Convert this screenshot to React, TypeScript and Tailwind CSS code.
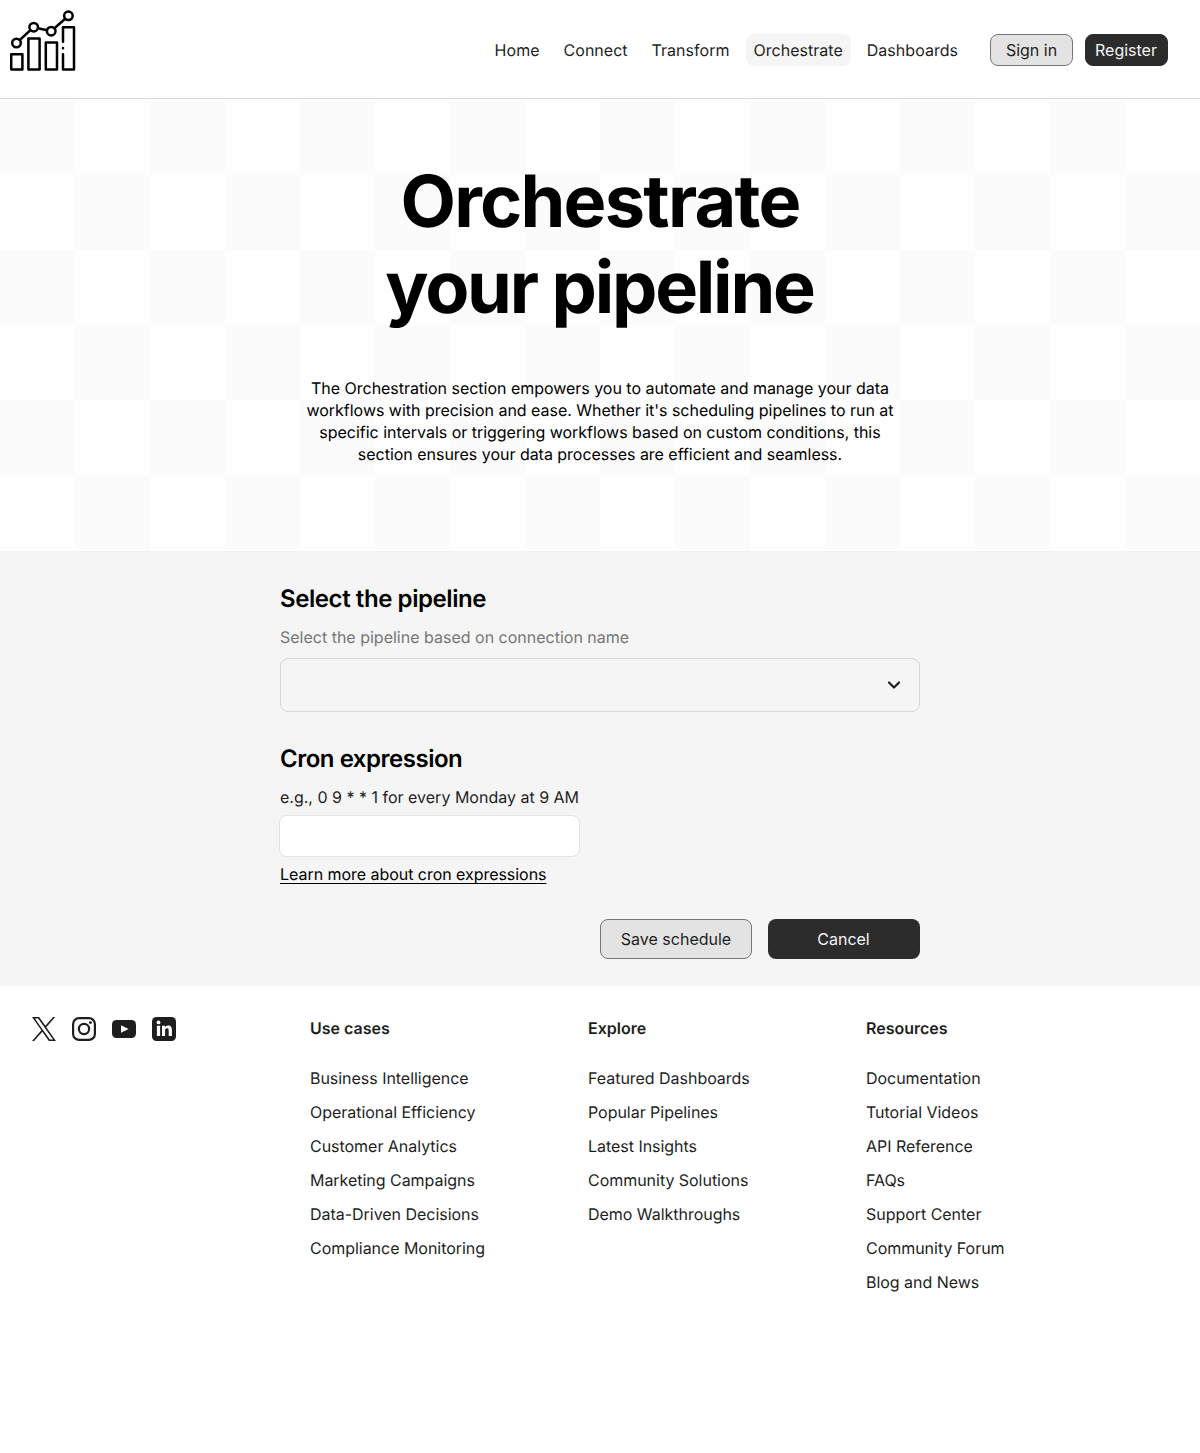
import React from "react";

const nav = ["Home", "Connect", "Transform", "Orchestrate", "Dashboards"];
const columns = [
  { title: "Use cases", links: ["Business Intelligence", "Operational Efficiency", "Customer Analytics", "Marketing Campaigns", "Data-Driven Decisions", "Compliance Monitoring"] },
  { title: "Explore", links: ["Featured Dashboards", "Popular Pipelines", "Latest Insights", "Community Solutions", "Demo Walkthroughs"] },
  { title: "Resources", links: ["Documentation", "Tutorial Videos", "API Reference", "FAQs", "Support Center", "Community Forum", "Blog and News"] },
];

function Logo() {
  return (
    <svg width="66" height="62" viewBox="0 0 66 62" fill="none" stroke="#000" strokeWidth="2.5" strokeLinejoin="round" strokeLinecap="round">
      <rect x="1.2" y="44.2" width="11.2" height="15.2" />
      <rect x="18.4" y="28.6" width="11.2" height="30.8" />
      <rect x="35.8" y="32.6" width="11.2" height="26.8" />
      <path d="M53 31.8V17.2h11v42.2H53V44.2M53 38v.2" />
      <circle cx="6.5" cy="33" r="4.3" />
      <circle cx="23.7" cy="17.2" r="4.3" />
      <circle cx="41.2" cy="21.2" r="4.3" />
      <circle cx="58.4" cy="5.8" r="4.3" />
      <path d="M9.8 30 20.4 20.2M28 18.2l9 2M44.4 18.2 55.2 8.8" />
    </svg>
  );
}

function Socials() {
  return (
    <div className="flex w-[278px] gap-4">
      <svg width="24" height="24" viewBox="0 0 24 24" fill="#1e1e1e">
        <path fillRule="evenodd" d="M14.28 10.16 23.22 0H21.1l-7.76 8.82L7.15 0H0l9.37 13.34L0 24h2.12l8.19-9.32L16.85 24H24zM11.38 13.46l-.95-1.33L2.88 1.56h3.25l6.1 8.53.95 1.33 7.92 11.09h-3.25z" />
      </svg>
      <svg width="24" height="24" viewBox="0 0 24 24" fill="none" stroke="#1e1e1e" strokeWidth="2.2">
        <rect x="1.1" y="1.1" width="21.8" height="21.8" rx="6" />
        <circle cx="12" cy="12" r="5.1" />
        <circle cx="18.4" cy="5.6" r="1.45" fill="#1e1e1e" stroke="none" />
      </svg>
      <svg width="24" height="24" viewBox="0 0 24 24">
        <rect y="3" width="24" height="18" rx="4.5" fill="#1e1e1e" />
        <path d="M9 8.3v7.4l7.6-3.7z" fill="#fff" />
      </svg>
      <svg width="24" height="24" viewBox="0 0 24 24">
        <rect width="24" height="24" rx="4.5" fill="#1e1e1e" />
        <circle cx="6.5" cy="5.4" r="1.9" fill="#fff" />
        <path fill="#fff" d="M4.9 8.8h3.2V19H4.9zM10 8.8h3v1.4c.5-.9 1.6-1.7 3.1-1.7 3.1 0 3.8 2 3.8 4.8V19h-3.2v-5.1c0-1.3-.1-2.7-1.7-2.7s-1.9 1.2-1.9 2.6V19H10z" />
      </svg>
    </div>
  );
}

export default function App() {
  return (
    <div className="min-h-[1453px] w-[1200px] bg-white font-['Inter',sans-serif] text-base leading-none text-[#1e1e1e] antialiased [text-rendering:geometricPrecision]">
      <header className="flex h-[99px] items-center border-b border-[#d9d9d9] pr-8">
        <div className="mt-[10px] ml-[10px] self-start"><Logo /></div>
        <nav className="mt-px ml-auto flex gap-2 tracking-[0.0015em]">
          {nav.map((n) => (
            <a key={n} className={n === "Orchestrate" ? "rounded-lg bg-[#f5f5f5] p-2" : "p-2"}>{n}</a>
          ))}
        </nav>
        <div className="mt-px ml-6 flex gap-3">
          <button className="h-8 w-[83px] rounded-lg border border-[#767676] bg-[#e3e3e3]">Sign in</button>
          <button className="h-8 w-[83px] rounded-lg border border-[#2c2c2c] bg-[#2c2c2c] pr-[7px] pl-[6px] text-[#f5f5f5]">Register</button>
        </div>
      </header>
      <section className="h-[452px] bg-[conic-gradient(#fefefe_25%,#fbfbfb_0_50%,#fefefe_0_75%,#fbfbfb_0)] bg-[length:150px_150px] bg-[position:0_1px] pt-[60px] text-center text-black">
        <h1 className="text-[72px] leading-[86px] font-bold">
          <span className="block tracking-[-0.0245em]">Orchestrate</span>
          <span className="block pr-px tracking-[-0.031em]">your pipeline</span>
        </h1>
        <p className="mt-[46px] leading-[22px] tracking-[-0.0015em]">
          The Orchestration section empowers you to automate and manage your data<br />
          workflows with precision and ease. Whether it's scheduling pipelines to run at<br />
          specific intervals or triggering workflows based on custom conditions, this<br />
          section ensures your data processes are efficient and seamless.
        </p>
      </section>
      <main className="h-[435px] bg-[#f5f5f5] px-[280px] pt-[33px]">
        <h2 className="text-2xl leading-[30px] font-semibold tracking-[-0.0175em] text-black">Select the pipeline</h2>
        <p className="mt-3 leading-[22px] text-[#757575]">Select the pipeline based on connection name</p>
        <div className="mt-[10px] flex h-[54px] items-center justify-end rounded-lg border border-[#d9d9d9] pr-[17px]">
          <svg width="16" height="16" viewBox="0 0 16 16" fill="none" stroke="#1e1e1e" strokeWidth="2.2" strokeLinecap="round" strokeLinejoin="round"><path d="m3 5.5 5 5 5-5" /></svg>
        </div>
        <h2 className="mt-8 text-2xl leading-[30px] font-semibold tracking-[-0.02em] text-black">Cron expression</h2>
        <p className="mt-3 leading-[22px]">e.g., 0 9 * * 1 for every Monday at 9 AM</p>
        <input className="mt-[7px] -ml-px block h-[42px] w-[301px] rounded-lg border border-[#e3e3e3] bg-white px-4" />
        <a className="mt-[6px] block w-fit leading-[22px] tracking-[-0.0025em] text-black underline decoration-[1.3px] underline-offset-[3px]">Learn more about cron expressions</a>
        <div className="mt-[34px] flex justify-end gap-4">
          <button className="h-10 w-[152px] rounded-lg border border-[#767676] bg-[#e3e3e3]">Save schedule</button>
          <button className="h-10 w-[152px] rounded-lg bg-[#2c2c2c] pr-[7px] pl-[6px] text-[#f5f5f5]">Cancel</button>
        </div>
      </main>
      <footer className="flex px-8 pt-[31px]">
        <Socials />
        {columns.map((c) => (
          <div key={c.title} className="w-[278px]">
            <h3 className="leading-[22px] font-semibold">{c.title}</h3>
            <ul className="mt-7 flex flex-col gap-3 tracking-[-0.002em]">
              {c.links.map((l) => <li key={l} className="leading-[22px]">{l}</li>)}
            </ul>
          </div>
        ))}
      </footer>
    </div>
  );
}
